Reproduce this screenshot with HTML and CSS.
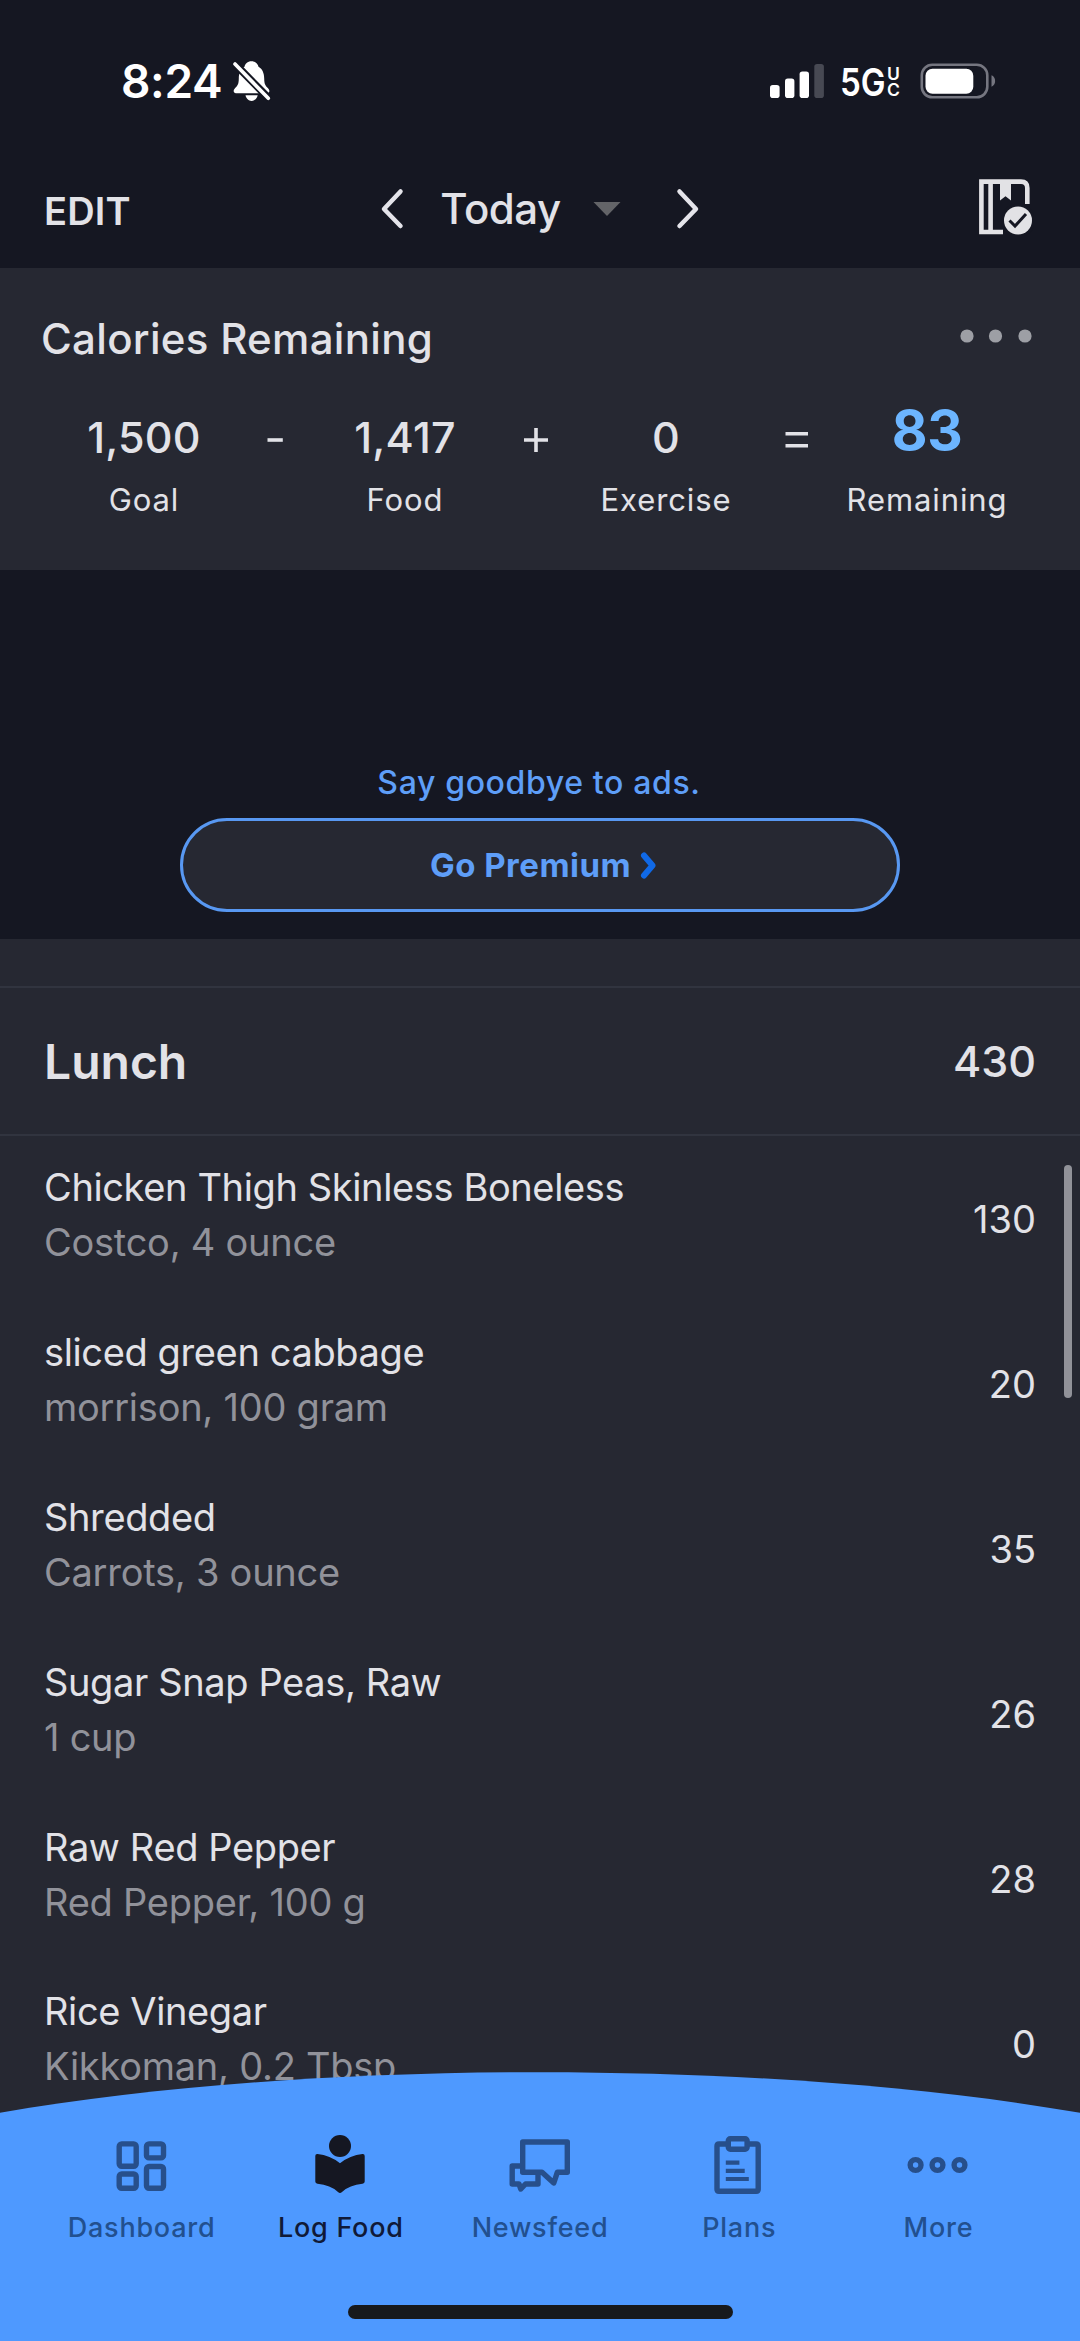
FILE: index.html
```html
<!DOCTYPE html>
<html lang="en">
<head>
<meta charset="utf-8">
<title>Food Diary</title>
<link rel="stylesheet" href="styles.css">
</head>
<body>
<div class="screen">
  <div class="status">
    <div class="status-left">
      <span class="time">8:24</span>
      <svg width="40" height="42" viewBox="0 0 40 42" fill="#fff"><path d="M19.5 1.3c-4 0-6.5 2.6-7 5.5C8.5 9 6.8 13.5 6.8 18.5c0 6-1.5 7.5-4 10C.8 30.5 1.5 33 4 33.3h31c2.6-.3 3.2-2.8 1.2-4.8-2.5-2.5-4-4-4-10 0-5-1.7-9.5-5.7-11.7-.5-2.9-3-5.5-7-5.500z"/><path d="M13.500 35.300h12.200c-.8 3.300-3 5.600-6.100 5.600s-5.300-2.300-6.100-5.600z"/><path d="M3.500 4.500L36 37.500" stroke="#151722" stroke-width="7.500" stroke-linecap="round"/><path d="M3 4L36.300 38.300" stroke="#fff" stroke-width="3.600" stroke-linecap="round"/></svg>
    </div>
    <div class="status-right">
      <svg width="54" height="34" viewBox="0 0 54 34" fill="#fff"><rect x="0" y="21" width="9.600" height="13" rx="2.800"/><rect x="15" y="14.600" width="9.400" height="19.400" rx="2.800"/><rect x="29.600" y="7.500" width="9.400" height="26.500" rx="2.800"/><rect x="44.300" y="0" width="9.600" height="34" rx="2.800" fill="#474953"/></svg>
      <div class="network"><span class="gen">5G</span><span class="uc"><span>U</span><span>C</span></span></div>
      <svg width="76" height="36" viewBox="0 0 76 36"><rect x="1.800" y="1.800" width="65.500" height="32.500" rx="10.500" fill="none" stroke="#757680" stroke-width="2.600"/><rect x="5.500" y="5.700" width="47.800" height="25" rx="7" fill="#fff"/><path d="M71.500 12.300c2.300.8 3.600 3 3.600 5.700s-1.300 4.900-3.600 5.700z" fill="#757680"/></svg>
    </div>
  </div>

  <header class="toolbar">
    <div class="edit">EDIT</div>
    <div class="date">
      <svg width="24" height="42" viewBox="0 0 24 42"><path d="M20.500 3.500L4 21L20.500 38" fill="none" stroke="#e4e4ea" stroke-width="4.500" stroke-linecap="round" stroke-linejoin="round"/></svg>
      <span class="today">Today</span>
      <svg class="caret" width="28" height="16" viewBox="0 0 28 16"><path d="M.5 1H27.500L14 15z" fill="#636468"/></svg>
      <svg width="24" height="42" viewBox="0 0 24 42"><path d="M3.500 3.500L20 21L3.500 38" fill="none" stroke="#e4e4ea" stroke-width="4.500" stroke-linecap="round" stroke-linejoin="round"/></svg>
    </div>
    <svg class="book" width="56" height="58" viewBox="0 0 56 58"><path d="M25 54H3.400V3.600H43Q49.300 3.600 49.300 10V26M12.600 3V54" fill="none" stroke="#e2e2e5" stroke-width="4.600"/><path d="M22 3h11v19.400l-5.500-4.200-5.500 4.200z" fill="#e2e2e5"/><circle cx="40" cy="42.500" r="17" fill="#151722"/><circle cx="40" cy="42.500" r="14" fill="#e2e2e5"/><path d="M31.500 42.500L37 48L48 36" fill="none" stroke="#151722" stroke-width="3"/></svg>
  </header>

  <section class="summary">
    <div class="summary-head">
      <h2>Calories Remaining</h2>
      <svg width="72" height="14" viewBox="0 0 72 14" fill="#9d9fa5"><circle cx="7" cy="7" r="6.600"/><circle cx="35.500" cy="7" r="6.600"/><circle cx="65" cy="7" r="6.600"/></svg>
    </div>
    <div class="equation">
      <div class="term"><b>1,500</b><span>Goal</span></div>
      <div class="op"><svg width="24" height="24" viewBox="0 0 24 24"><path d="M4.500 12H19.800"/></svg></div>
      <div class="term"><b>1,417</b><span>Food</span></div>
      <div class="op"><svg width="24" height="24" viewBox="0 0 24 24"><path d="M0 12H24M12 0V24"/></svg></div>
      <div class="term"><b>0</b><span>Exercise</span></div>
      <div class="op"><svg width="24" height="24" viewBox="0 0 24 24"><path d="M.5 5.700H23M.5 17.700H23"/></svg></div>
      <div class="term total"><b>83</b><span>Remaining</span></div>
    </div>
  </section>

  <section class="ad">
    <div class="ad-text">Say goodbye to ads.</div>
    <div class="premium"><span>Go Premium</span><svg width="17" height="27" viewBox="0 0 17 27"><path d="M4 3.500L12.500 13.500L4 23.500" fill="none" stroke="#1069e6" stroke-width="6" stroke-linecap="round" stroke-linejoin="round"/></svg></div>
  </section>

  <section class="diary">
    <div class="meal"><h1>Lunch</h1><span>430</span></div>
    <div class="item"><div class="info"><p>Chicken Thigh Skinless Boneless</p><p class="sub">Costco, 4 ounce</p></div><span>130</span></div>
    <div class="item"><div class="info"><p>sliced green cabbage</p><p class="sub">morrison, 100 gram</p></div><span>20</span></div>
    <div class="item"><div class="info"><p>Shredded</p><p class="sub">Carrots, 3 ounce</p></div><span>35</span></div>
    <div class="item"><div class="info"><p>Sugar Snap Peas, Raw</p><p class="sub">1 cup</p></div><span>26</span></div>
    <div class="item"><div class="info"><p>Raw Red Pepper</p><p class="sub">Red Pepper, 100 g</p></div><span>28</span></div>
    <div class="item"><div class="info"><p>Rice Vinegar</p><p class="sub">Kikkoman, 0.2 Tbsp</p></div><span>0</span></div>
    <div class="scrollbar"></div>
  </section>

  <nav class="tabbar">
    <svg class="curve" width="1080" height="269" viewBox="0 0 1080 269"><path d="M0 40.800C310 -13.400 770 -13.400 1080 40.800V269H0z" fill="#4e99ff"/></svg>
    <div class="tabs">
      <div class="tab"><svg viewBox="0 0 64 64"><rect x="10.200" y="10.900" width="17" height="22.400" rx="2.500"/><rect x="37.500" y="10.900" width="17" height="14" rx="2.500"/><rect x="10.200" y="41" width="17" height="14.300" rx="2.500"/><rect x="37.500" y="33.500" width="17" height="21.800" rx="2.500"/></svg><span>Dashboard</span></div>
      <div class="tab active"><svg viewBox="0 0 64 64"><circle cx="32" cy="13" r="11"/><path d="M7.300 23Q7.300 20.800 9.500 21Q22 22.300 32 30.200Q42 22.300 54.500 21Q56.700 20.800 56.700 23V48.500Q56.700 50.500 54.500 50.800Q41.500 52 34 59Q32 61 30 59Q22.500 52 9.500 50.800Q7.300 50.500 7.300 48.500Z"/></svg><span>Log Food</span></div>
      <div class="tab"><svg viewBox="0 0 64 64"><path d="M15.700 9H60.300V39.300H50.300L46.800 50L35 39.300H15.700zM15.700 33H5.200V51H12L13.800 56L18.500 51H31V41"/></svg><span>Newsfeed</span></div>
      <div class="tab"><svg viewBox="0 0 64 64"><path d="M22.500 11H13Q11 11 11 13V56.300Q11 58.300 13 58.300H50.200Q52.200 58.300 52.200 56.300V13Q52.200 11 50.200 11H41"/><rect x="22.300" y="5.800" width="18.800" height="10.500" rx="2"/><path stroke-width="4.200" d="M19.800 29.700H33.400M19.800 37.800H38.700M19.800 46H42.800"/></svg><span>Plans</span></div>
      <div class="tab"><svg viewBox="0 0 64 64"><circle cx="10.600" cy="32" r="5.400"/><circle cx="32.500" cy="32" r="5.400"/><circle cx="54.500" cy="32" r="5.400"/></svg><span>More</span></div>
    </div>
    <div class="home"></div>
  </nav>
</div>
</body>
</html>
```
FILE: styles.css
```css
* { box-sizing: border-box; margin: 0; padding: 0; }
body {
  background: #151722;
  color: #e2e2e7;
  font-family: Inter, "Liberation Sans", sans-serif;
}
svg { display: block; flex: none; }
.screen {
  position: relative;
  display: flex;
  flex-direction: column;
  width: 1080px;
  height: 2341px;
  overflow: hidden;
}

/* Status bar */
.status {
  display: flex;
  justify-content: space-between;
  align-items: center;
  height: 153px;
  padding: 8px 84px 0 121px;
  color: #fff;
}
.status-left { display: flex; align-items: center; gap: 10px; }
.time { font-size: 46px; font-weight: 600; letter-spacing: -0.35px; }
.status-right { display: flex; align-items: center; gap: 19px; }
.network { display: flex; align-items: center; width: 58px; height: 34px; }
.gen {
  flex: none;
  width: 44px;
  margin-left: -3px;
  font-size: 38px;
  font-weight: 600;
  line-height: 34px;
  transform: scaleX(0.87);
  transform-origin: left;
  padding-top: 3px;
}
.uc {
  display: flex;
  flex-direction: column;
  padding: 3px 0 0 3px;
  font-size: 17.5px;
  font-weight: 600;
  line-height: 16px;
}

/* Date toolbar */
.toolbar {
  display: grid;
  grid-template-columns: 1fr auto 1fr;
  align-items: center;
  height: 115px;
  padding: 0 46px 0 44px;
}
.edit { font-size: 38px; font-weight: 600; letter-spacing: 0.18px; }
.date {
  display: flex;
  align-items: center;
  padding-bottom: 4px;
  margin-left: 2px;
}
.today {
  margin: 0 32px 0 36px;
  font-size: 42px;
  font-weight: 500;
  letter-spacing: -0.5px;
}
.caret { margin-right: 55px; }
.book { justify-self: end; margin-bottom: 7px; }

/* Calorie summary */
.summary { height: 302px; background: #262832; }
.summary-head {
  display: flex;
  justify-content: space-between;
  align-items: center;
  height: 92px;
  padding: 50px 48px 0 41px;
}
.summary-head h2 {
  font-size: 42px;
  font-weight: 500;
  line-height: 42px;
  letter-spacing: 0.3px;
}
.summary-head svg { margin-bottom: 7px; }
.equation {
  display: flex;
  padding: 45px 69px 0 60px;
}
.term {
  display: flex;
  flex-direction: column;
  align-items: center;
  width: 168px;
}
.term b {
  height: 73px;
  font-size: 43px;
  font-weight: 500;
  line-height: 64px;
  letter-spacing: 0.2px;
}
.term span {
  font-size: 31px;
  line-height: 44px;
  letter-spacing: 0.9px;
}
.term.total b {
  color: #6cb5ff;
  font-size: 55px;
  font-weight: 700;
  line-height: 50px;
  letter-spacing: -0.5px;
}
.op { display: flex; justify-content: center; width: 93px; padding-top: 23px; }
.op svg { fill: none; stroke: #e2e2e7; stroke-width: 3.6; }

/* Ad slot */
.ad {
  display: flex;
  flex-direction: column;
  justify-content: flex-end;
  align-items: center;
  height: 369px;
  padding-bottom: 27px;
  color: #5e9ef8;
}
.ad-text {
  margin: 0 2px 15px 0;
  font-size: 32px;
  font-weight: 500;
  line-height: 40px;
  letter-spacing: 0.64px;
}
.premium {
  display: flex;
  justify-content: center;
  align-items: center;
  gap: 9px;
  width: 720px;
  height: 94px;
  padding-left: 7px;
  border: 3px solid #5898f2;
  border-radius: 47px;
  background: #262832;
  font-size: 33px;
  font-weight: 700;
  letter-spacing: 0.5px;
}

/* Diary */
.diary {
  position: relative;
  height: 1402px;
  padding-top: 47px;
  background: #262832;
}
.meal {
  display: flex;
  justify-content: space-between;
  align-items: center;
  height: 150px;
  margin-bottom: 1px;
  padding: 0 44px 0 44px;
  border-top: 2px solid #31343f;
  border-bottom: 2px solid #31343f;
}
.meal h1 { font-size: 48px; font-weight: 600; }
.meal span { font-size: 43px; font-weight: 500; }
.item {
  display: flex;
  justify-content: space-between;
  align-items: center;
  height: 164.9px;
  padding: 0 44px 0 44px;
  font-size: 38px;
}
.info { margin-bottom: 9px; line-height: 55px; letter-spacing: -0.38px; }
.sub { color: #91929a; letter-spacing: -0.25px; }
.scrollbar {
  position: absolute;
  top: 226px;
  right: 8px;
  width: 8px;
  height: 233px;
  border-radius: 4px;
  background: #919299;
}

/* Tab bar */
.tabbar {
  position: absolute;
  left: 0;
  bottom: 0;
  width: 1080px;
  height: 269px;
}
.curve { position: absolute; inset: 0; }
.tabs {
  position: relative;
  display: grid;
  grid-template-columns: repeat(5, 1fr);
  padding: 61px 43px 0 41px;
}
.tab {
  display: flex;
  flex-direction: column;
  align-items: center;
  color: #22508f;
  font-size: 27px;
  font-weight: 500;
  line-height: 40px;
  letter-spacing: 0.75px;
}
.tab span { padding: 1px 0 0 2px; }
.tab svg {
  width: 64px;
  height: 64px;
  margin-bottom: 10px;
  fill: none;
  stroke: #274f8b;
  stroke-width: 5.4;
  stroke-linejoin: round;
}
.tab.active { color: #101a38; }
.tab.active svg { fill: #151722; stroke: none; }
.home {
  position: absolute;
  left: 348px;
  bottom: 22px;
  width: 385px;
  height: 14px;
  border-radius: 7px;
  background: #17191c;
}
```
